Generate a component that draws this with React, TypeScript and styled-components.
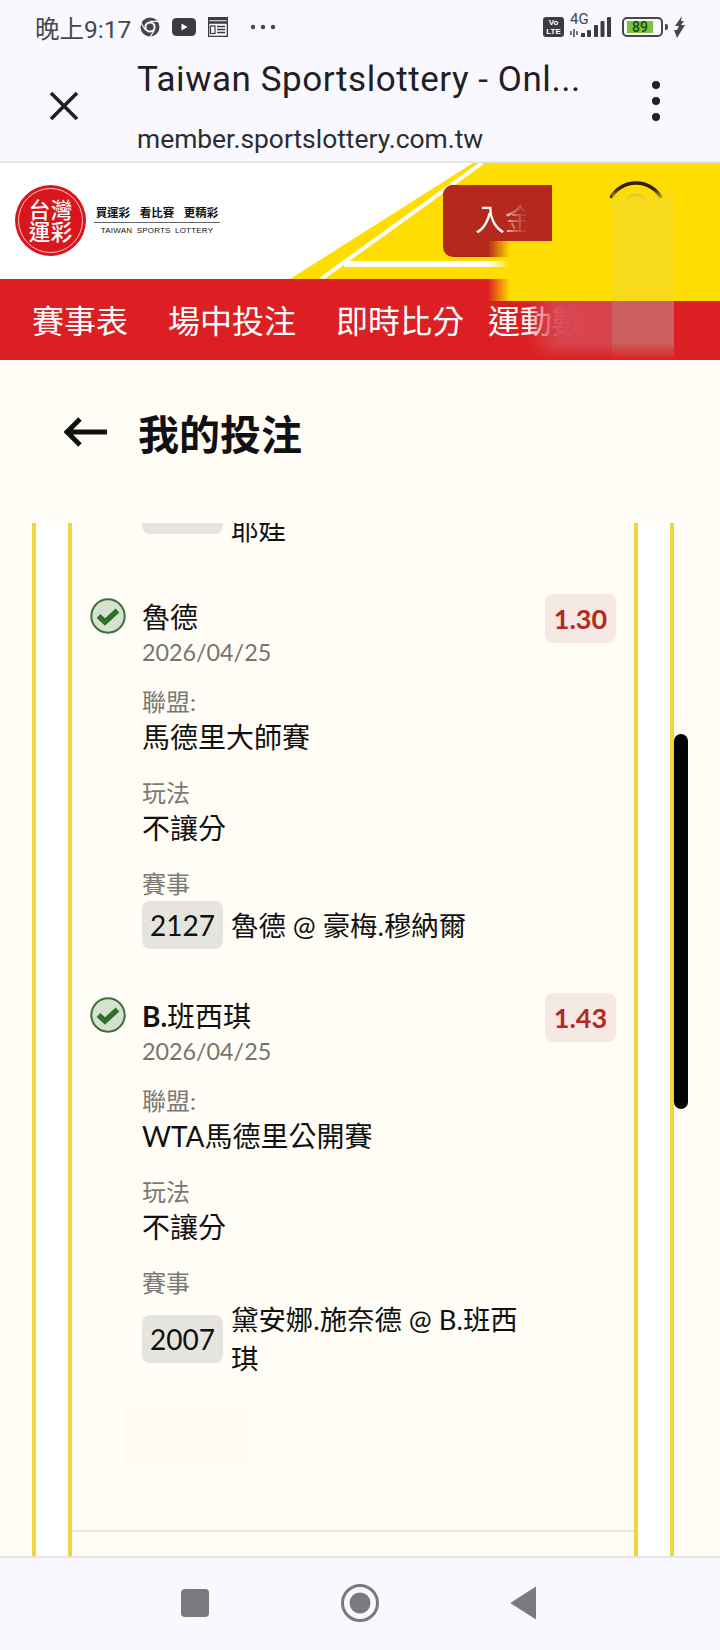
import React from "react";
import styled, { createGlobalStyle } from "styled-components";

const GlobalStyle = createGlobalStyle`
  html, body { margin: 0; padding: 0; background: #fffdf6; }
  * { box-sizing: border-box; }
`;

const FONT = `Lato, "Noto Sans CJK TC", sans-serif`;
const ANDROID = `Roboto, "Noto Sans CJK TC", sans-serif`;

const Screen = styled.div`
  width: 720px;
  height: 1650px;
  display: flex;
  flex-direction: column;
  overflow: hidden;
  position: relative;
  background: #fffdf6;
  font-family: ${FONT};
`;

const BrowserChrome = styled.div`
  height: 163px;
  flex: none;
  background: #f8f8fe;
  border-bottom: 2px solid #e4e5ea;
`;

const StatusBar = styled.div`
  height: 54px;
  display: flex;
  align-items: center;
  padding: 0 35px;
  color: #47474b;
`;

const Clock = styled.span`
  font-family: ${ANDROID};
  font-size: 24.5px;
  margin-right: 9px;
`;

const StatusLeft = styled.div`
  display: flex;
  align-items: center;
  flex: 1;
`;

const StatusIconSlot = styled.span<{ $gap: number }>`
  display: flex;
  margin-right: ${(p) => p.$gap}px;
`;

const StatusRight = styled.div`
  display: flex;
  align-items: center;
  margin-right: -1px;
`;

const Toolbar = styled.div`
  height: 107px;
  display: flex;
  align-items: flex-start;
`;

const CloseSlot = styled.div`
  width: 137px;
  padding: 37px 0 0 49px;
`;

const PageInfo = styled.div`
  flex: 1;
  padding-top: 8px;
  color: #1f2024;
  font-family: ${ANDROID};
  min-width: 0;
`;

const PageTitle = styled.div`
  font-size: 35px;
  line-height: 36px;
  letter-spacing: 0.55px;
  white-space: nowrap;
`;

const PageUrl = styled.div`
  font-size: 26.4px;
  line-height: 36px;
  margin-top: 23px;
  color: #2b2c30;
  white-space: nowrap;
`;

const MenuDots = styled.div`
  width: 8px;
  margin: 27px 60px 0 0;
  display: flex;
  flex-direction: column;
  gap: 8px;
`;

const MenuDot = styled.span`
  width: 8px;
  height: 8px;
  border-radius: 50%;
  background: #1f2024;
`;

const Masthead = styled.div`
  position: relative;
  flex: none;
`;

const Header = styled.div`
  height: 116px;
  background: #fff;
  display: flex;
  align-items: center;
  padding: 0 0 2px 15px;
  gap: 8px;
`;

const LogoBadge = styled.div`
  width: 71px;
  height: 71px;
  border-radius: 50%;
  background: #d9151e;
  display: grid;
  grid-template-columns: 22px 22px;
  grid-template-rows: 22px 22px;
  place-items: center;
  justify-content: center;
  align-content: center;
  position: relative;
  color: #fff;
  font-family: "Noto Sans CJK TC", sans-serif;
  font-weight: 500;
  font-size: 21.5px;
  line-height: 22px;
  z-index: 1;
  &::after {
    content: "";
    position: absolute;
    inset: 3px;
    border: 1px solid #f6c6c6;
    border-radius: 50%;
  }
`;

const Slogan = styled.div`
  display: flex;
  flex-direction: column;
  align-items: center;
  width: 126px;
  color: #111;
  z-index: 1;
`;

const SloganCn = styled.div`
  font-family: "Noto Sans CJK TC", sans-serif;
  font-weight: 700;
  font-size: 11.5px;
  line-height: 18px;
  word-spacing: 7px;
  padding-bottom: 1px;
  border-bottom: 1px solid #666;
  width: 100%;
  text-align: center;
  white-space: nowrap;
`;

const SloganEn = styled.div`
  font-family: "Liberation Sans", sans-serif;
  font-size: 8px;
  line-height: 15px;
  word-spacing: 2px;
  letter-spacing: 0.2px;
  white-space: nowrap;
`;

const HeaderArt = styled.svg`
  position: absolute;
  left: 0;
  top: 0;
`;

const ButtonBase = styled.div`
  position: absolute;
  left: 443px;
  top: 22px;
  width: 119px;
  height: 72px;
  border-radius: 10px;
  background: #b5281c;
`;

const DepositButton = styled.div`
  position: absolute;
  left: 443px;
  top: 22px;
  width: 109px;
  height: 56px;
  border-radius: 10px 0 0 0;
  background: #b5281c;
  z-index: 3;
  padding: 14px 0 0 32px;
  font-family: "Noto Sans CJK TC", sans-serif;
  font-size: 30px;
  line-height: 36px;
  white-space: nowrap;
`;

const FadedLabel = styled.span`
  background: linear-gradient(to right, #fff 0%, #fff 46%, rgba(255, 255, 255, 0.4) 62%, rgba(255, 255, 255, 0) 88%);
  -webkit-background-clip: text;
  background-clip: text;
  color: transparent;
`;

const YellowBlur = styled.div`
  position: absolute;
  left: 488px;
  top: 0;
  width: 232px;
  height: 138px;
  background: linear-gradient(to right, rgba(255, 221, 0, 0), #ffdd00 22px);
  z-index: 2;
`;

const RingArc = styled.svg`
  position: absolute;
  left: 606px;
  top: 15px;
  z-index: 2;
`;

const PaleColumn = styled.div`
  position: absolute;
  left: 612px;
  top: 26px;
  width: 62px;
  height: 112px;
  background: linear-gradient(to bottom, rgba(247, 218, 28, 0) 0, #f7da1c 12px);
  z-index: 2;
`;

const NavBar = styled.nav`
  height: 81px;
  background: #dc1f22;
  display: flex;
  align-items: center;
  padding: 0 0 2px 32px;
  overflow: hidden;
  color: #fff;
  font-family: "Noto Sans CJK TC", sans-serif;
  font-size: 32px;
`;

const NavItem = styled.span<{ $gap: number }>`
  margin-right: ${(p) => p.$gap}px;
  white-space: nowrap;
  flex: none;
`;

const NavFade = styled.div`
  position: absolute;
  left: 527px;
  top: 138px;
  width: 147px;
  height: 59px;
  background: linear-gradient(
    to right,
    rgba(216, 69, 79, 0) 0,
    rgba(216, 69, 79, 0.7) 20px,
    rgba(216, 69, 79, 0.94) 30px,
    rgb(216, 69, 79) 57px,
    rgb(216, 69, 79) 85px,
    #cc5f5f 85px,
    #cc5f5f 147px
  );
  -webkit-mask-image: linear-gradient(to bottom, #000 72%, transparent);
  mask-image: linear-gradient(to bottom, #000 72%, transparent);
  z-index: 2;
`;

const TitleRow = styled.div`
  height: 163px;
  flex: none;
  display: flex;
  align-items: center;
  padding: 0 0 19px 64px;
  gap: 31px;
  background: #fffdf6;
`;

const PageHeading = styled.h1`
  margin: 0;
  font-family: "Noto Sans CJK TC", sans-serif;
  font-weight: 700;
  font-size: 41px;
  line-height: 48px;
  color: #111;
`;

const ScrollArea = styled.main`
  flex: 1;
  min-height: 0;
  position: relative;
  overflow: hidden;
  padding: 0 46px 0 32px;
`;

const OuterRail = styled.div`
  height: 100%;
  background: #fff;
  border-left: 4px solid #f1d53f;
  border-right: 4px solid #f1d53f;
  padding: 0 32px;
`;

const Panel = styled.div`
  height: 100%;
  background: #fffdf6;
  border-left: 4px solid #f1d53f;
  border-right: 4px solid #f1d53f;
  overflow: hidden;
`;

const ClippedPrev = styled.div`
  margin: -52px 0 50px 70px;
  display: flex;
  align-items: center;
  gap: 8px;
`;

const BetRow = styled.article`
  display: grid;
  grid-template-columns: 36px 1fr auto;
  column-gap: 16px;
  padding: 0 18px;
  margin-bottom: 49px;
`;

const CheckSlot = styled.div`
  margin-top: -1px;
`;

const BetBody = styled.div`
  min-width: 0;
`;

const BetName = styled.div`
  font-size: 28px;
  line-height: 36px;
  color: #111;
`;

const NamePrefix = styled.strong`
  font-weight: 700;
  font-family: Lato, sans-serif;
`;

const BetDate = styled.div`
  font-size: 23.3px;
  line-height: 34px;
  color: #76746f;
  margin-bottom: 16px;
`;

const FieldGroup = styled.div`
  margin-bottom: 21px;
`;

const MatchGroup = styled.div``;

const FieldLabel = styled.div`
  font-size: 24px;
  line-height: 34px;
  color: #7b7975;
`;

const FieldValue = styled.div`
  font-size: 28px;
  line-height: 36px;
  color: #111;
  white-space: nowrap;
`;

const MatchRow = styled.div`
  display: flex;
  align-items: center;
  gap: 8px;
`;

const Chip = styled.div`
  flex: none;
  width: 81px;
  height: 48px;
  border-radius: 8px;
  background: #e6e4de;
  display: flex;
  align-items: center;
  justify-content: center;
  font-size: 28px;
  color: #111;
`;

const MatchText = styled.div`
  font-size: 27.4px;
  line-height: 39px;
  color: #111;
  width: 292px;
  word-break: break-all;
`;

const OddsBadge = styled.div`
  align-self: start;
  margin-top: -5px;
  width: 71px;
  height: 49px;
  border-radius: 8px;
  background: #f6e8e2;
  color: #b22a22;
  font-weight: 700;
  font-size: 27px;
  display: flex;
  align-items: center;
  justify-content: center;
`;

const FaintBlock = styled.div`
  width: 122px;
  height: 61px;
  margin: -22px 0 64px 52px;
  background: #fdfbf4;
`;

const Divider = styled.hr`
  margin: 0;
  border: none;
  height: 2px;
  background: #e9e7e0;
`;

const ScrollThumb = styled.div`
  position: absolute;
  left: 674px;
  top: 211px;
  width: 14px;
  height: 375px;
  border-radius: 7px;
  background: #000;
`;

const BottomNav = styled.div`
  height: 94px;
  flex: none;
  background: #f8f8fe;
  border-top: 2px solid #e4e4e6;
  display: flex;
  align-items: center;
  justify-content: space-between;
  padding: 0 184px 2px 181px;
`;

const CheckIcon = () => (
  <svg width="36" height="36" viewBox="0 0 36 36">
    <circle cx="18" cy="18" r="16.7" fill="#d5e2cf" stroke="#3f6f38" strokeWidth="2" />
    <path d="M8.5 18 L15 24 L27.5 12.5" fill="none" stroke="#2f7026" strokeWidth="5.5" strokeLinejoin="miter" />
  </svg>
);

const CloseIcon = () => (
  <svg width="30" height="30" viewBox="0 0 30 30">
    <path d="M2 2 L28 28 M28 2 L2 28" stroke="#1f2024" strokeWidth="3.6" fill="none" />
  </svg>
);

const BackArrow = () => (
  <svg width="43" height="30" viewBox="0 0 43 30">
    <path d="M43 15 H3 M16 2 L3 15 L16 28" stroke="#111" strokeWidth="4.8" fill="none" />
  </svg>
);

const ChromeGlyph = () => (
  <svg width="20" height="20" viewBox="0 0 20 20">
    <circle cx="10" cy="10" r="9.5" fill="#47474b" />
    <circle cx="10" cy="10" r="5.6" fill="#f8f8fe" />
    <circle cx="10" cy="10" r="3.6" fill="#47474b" />
    <path d="M10 4.4 H19 M5.3 13 L1 6 M14.6 13 L10 20" stroke="#f8f8fe" strokeWidth="1.2" />
  </svg>
);

const VideoGlyph = () => (
  <svg width="24" height="18" viewBox="0 0 24 18">
    <rect width="24" height="18" rx="4.5" fill="#3c3c40" />
    <path d="M9.5 5.5 L15.5 9 L9.5 12.5 Z" fill="#fff" />
  </svg>
);

const CalendarGlyph = () => (
  <svg width="20" height="20" viewBox="0 0 20 20">
    <path d="M0.5 0.5 H19.5 V19.5 H0.5 Z" fill="none" stroke="#3c3c40" strokeWidth="1.6" />
    <path d="M0 2 H20 M0 5.5 H20" stroke="#3c3c40" strokeWidth="2.6" />
    <path d="M9 9.5 H17 M9 12.5 H17 M9 15.5 H17" stroke="#3c3c40" strokeWidth="1.4" />
    <rect x="2.5" y="9" width="4.5" height="7.5" fill="none" stroke="#3c3c40" strokeWidth="1.2" />
  </svg>
);

const MoreDots = () => (
  <svg width="26" height="6" viewBox="0 0 26 6">
    <circle cx="3" cy="3" r="2.2" fill="#47474b" />
    <circle cx="13" cy="3" r="2.2" fill="#47474b" />
    <circle cx="23" cy="3" r="2.2" fill="#47474b" />
  </svg>
);

const VoLteLabel = styled.div`
  width: 21px;
  height: 20px;
  border-radius: 3px;
  background: #3c3c40;
  color: #fff;
  font-family: "Liberation Sans", sans-serif;
  font-weight: 700;
  font-size: 8px;
  line-height: 9px;
  text-align: center;
  padding-top: 1px;
  margin-right: 6px;
`;

const SignalWrap = styled.div`
  position: relative;
  width: 42px;
  height: 22px;
  margin-right: 10px;
`;

const FourG = styled.span`
  position: absolute;
  left: 0;
  top: -4px;
  font-family: ${ANDROID};
  font-size: 15px;
  line-height: 15px;
  color: #47474b;
`;

const SignalGlyph = () => (
  <svg width="42" height="22" viewBox="0 0 42 22">
    <path d="M1 15 V19 M4 13 V21 M7 15 V19" stroke="#3c3c40" strokeWidth="1.4" />
    <rect x="11" y="17" width="4" height="4" fill="#3c3c40" />
    <rect x="17" y="14" width="4" height="7" rx="1" fill="#3c3c40" />
    <rect x="24" y="9" width="4" height="12" rx="1" fill="#3c3c40" />
    <rect x="30.5" y="5" width="4" height="16" rx="1" fill="#3c3c40" />
    <rect x="37" y="1" width="4" height="20" rx="1" fill="#3c3c40" />
  </svg>
);

const BatteryShell = styled.div`
  position: relative;
  width: 41px;
  height: 20px;
  border: 2px solid #47474b;
  border-radius: 5px;
  padding: 2px 3px;
  margin-right: 2px;
`;

const BatteryFill = styled.div`
  height: 100%;
  width: 26px;
  background: #7ec242;
  color: #10500f;
  font-family: ${ANDROID};
  font-size: 14px;
  line-height: 12px;
  font-weight: 500;
  text-align: center;
`;

const BatteryTip = styled.span`
  width: 3px;
  height: 6px;
  border-radius: 0 2px 2px 0;
  background: #47474b;
  margin-right: 6px;
`;

const BoltGlyph = () => (
  <svg width="12" height="22" viewBox="0 0 12 22">
    <path d="M8 0 L1 10 H5 L3 14 L0 14 L3 22 L11 9 H7 L10 5 L7 5 Z" fill="#47474b" />
  </svg>
);

const SquareKey = () => (
  <svg width="28" height="28" viewBox="0 0 28 28">
    <rect width="28" height="28" rx="4" fill="#7a7a7e" />
  </svg>
);

const CircleKey = () => (
  <svg width="38" height="38" viewBox="0 0 38 38">
    <circle cx="19" cy="19" r="17.5" fill="none" stroke="#7a7a7e" strokeWidth="3" />
    <circle cx="19" cy="19" r="10.5" fill="#7a7a7e" />
  </svg>
);

const BackKey = () => (
  <svg width="26" height="34" viewBox="0 0 26 34">
    <path d="M26 1 V33 L1 17 Z" fill="#7a7a7e" stroke="#7a7a7e" strokeLinejoin="round" />
  </svg>
);

type Field = { label: string; value: string };
type Bet = {
  prefix?: string;
  name: string;
  odds: string;
  fields: Field[];
  chip: string;
  match: string;
};

const BETS: Bet[] = [
  {
    name: "魯德",
    odds: "1.30",
    fields: [
      { label: "聯盟:", value: "馬德里大師賽" },
      { label: "玩法", value: "不讓分" },
    ],
    chip: "2127",
    match: "魯德 @ 豪梅.穆納爾",
  },
  {
    prefix: "B.",
    name: "班西琪",
    odds: "1.43",
    fields: [
      { label: "聯盟:", value: "WTA馬德里公開賽" },
      { label: "玩法", value: "不讓分" },
    ],
    chip: "2007",
    match: "黛安娜.施奈德 @ B.班西琪",
  },
];

export default function App() {
  return (
    <Screen>
      <GlobalStyle />
      <BrowserChrome>
        <StatusBar>
          <StatusLeft>
            <Clock>晚上9:17</Clock>
            <StatusIconSlot $gap={12}>
              <ChromeGlyph />
            </StatusIconSlot>
            <StatusIconSlot $gap={12}>
              <VideoGlyph />
            </StatusIconSlot>
            <StatusIconSlot $gap={22}>
              <CalendarGlyph />
            </StatusIconSlot>
            <MoreDots />
          </StatusLeft>
          <StatusRight>
            <VoLteLabel>
              Vo
              <br />
              LTE
            </VoLteLabel>
            <SignalWrap>
              <FourG>4G</FourG>
              <SignalGlyph />
            </SignalWrap>
            <BatteryShell>
              <BatteryFill>89</BatteryFill>
            </BatteryShell>
            <BatteryTip />
            <BoltGlyph />
          </StatusRight>
        </StatusBar>
        <Toolbar>
          <CloseSlot>
            <CloseIcon />
          </CloseSlot>
          <PageInfo>
            <PageTitle>Taiwan Sportslottery - Onl...</PageTitle>
            <PageUrl>member.sportslottery.com.tw</PageUrl>
          </PageInfo>
          <MenuDots>
            <MenuDot />
            <MenuDot />
            <MenuDot />
          </MenuDots>
        </Toolbar>
      </BrowserChrome>

      <Masthead>
        <HeaderArt width="720" height="116" viewBox="0 0 720 116">
          <path d="M473 0 H720 V116 H290 Z" fill="#ffdd00" />
          <path d="M482 0 L321 116" stroke="#fff" strokeWidth="4" fill="none" />
          <path d="M344 101 H520" stroke="#fff" strokeWidth="6" fill="none" />
        </HeaderArt>
        <Header>
          <LogoBadge>
            <span>台</span>
            <span>灣</span>
            <span>運</span>
            <span>彩</span>
          </LogoBadge>
          <Slogan>
            <SloganCn>買運彩 看比賽 更精彩</SloganCn>
            <SloganEn>TAIWAN SPORTS LOTTERY</SloganEn>
          </Slogan>
        </Header>
        <ButtonBase />
        <YellowBlur />
        <RingArc width="60" height="24" viewBox="0 0 60 24">
          <path d="M5 20 A27 24 0 0 1 55 20" fill="none" stroke="#2a2410" strokeWidth="3.5" />
          <path d="M20 22 A12 11 0 0 1 40 22" fill="none" stroke="#c9b84a" strokeWidth="3" />
        </RingArc>
        <PaleColumn />
        <DepositButton>
          <FadedLabel>入金</FadedLabel>
        </DepositButton>
        <NavBar>
          <NavItem $gap={40}>賽事表</NavItem>
          <NavItem $gap={40}>場中投注</NavItem>
          <NavItem $gap={24}>即時比分</NavItem>
          <NavItem $gap={0}>運動數據</NavItem>
        </NavBar>
        <NavFade />
      </Masthead>

      <TitleRow>
        <BackArrow />
        <PageHeading>我的投注</PageHeading>
      </TitleRow>

      <ScrollArea>
        <OuterRail>
          <Panel>
            <ClippedPrev>
              <Chip />
              <MatchText>
                {"\u00a0"}
                <br />
                耶娃
              </MatchText>
            </ClippedPrev>
            {BETS.map((bet) => (
              <BetRow key={bet.chip}>
                <CheckSlot>
                  <CheckIcon />
                </CheckSlot>
                <BetBody>
                  <BetName>
                    {bet.prefix && <NamePrefix>{bet.prefix}</NamePrefix>}
                    {bet.name}
                  </BetName>
                  <BetDate>2026/04/25</BetDate>
                  {bet.fields.map((f) => (
                    <FieldGroup key={f.label}>
                      <FieldLabel>{f.label}</FieldLabel>
                      <FieldValue>{f.value}</FieldValue>
                    </FieldGroup>
                  ))}
                  <MatchGroup>
                    <FieldLabel>賽事</FieldLabel>
                    <MatchRow>
                      <Chip>{bet.chip}</Chip>
                      <MatchText>{bet.match}</MatchText>
                    </MatchRow>
                  </MatchGroup>
                </BetBody>
                <OddsBadge>{bet.odds}</OddsBadge>
              </BetRow>
            ))}
            <FaintBlock />
            <Divider />
          </Panel>
        </OuterRail>
        <ScrollThumb />
      </ScrollArea>

      <BottomNav>
        <SquareKey />
        <CircleKey />
        <BackKey />
      </BottomNav>
    </Screen>
  );
}
